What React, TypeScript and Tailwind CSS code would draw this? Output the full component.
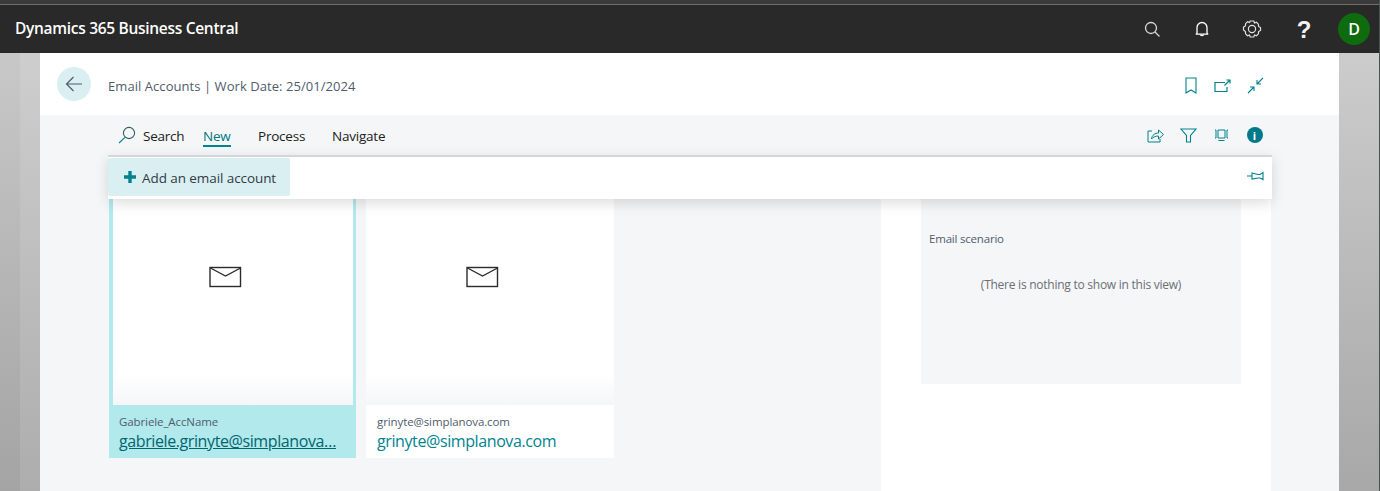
const teal = '#00838f'

function HeaderIcons() {
  return (
    <div className="flex items-center">
      <div className="w-[50px] flex justify-center">
        <svg width="18" height="18" viewBox="0 0 18 18" fill="none" stroke="#d8d8d8" strokeWidth="1.3">
          <circle cx="8" cy="8" r="5.5" />
          <path d="M12 12l4.5 4.5" />
        </svg>
      </div>
      <div className="w-[50px] flex justify-center">
        <svg width="18" height="18" viewBox="0 0 18 18" fill="none" stroke="#ffffff" strokeWidth="1.3">
          <path d="M4 13V7.5a5 5 0 0 1 10 0V13c0 .7.5 1 1.2 1.2H2.8C3.5 14 4 13.7 4 13z" />
          <path d="M7.3 14.500c.2 1.600 3.200 1.600 3.400 0" />
        </svg>
      </div>
      <div className="w-[50px] mr-0.5 flex justify-center">
        <svg width="20" height="20" viewBox="0 0 20 20" fill="none" stroke="#e2e2e2" strokeWidth="1.2">
          <path d="M8.2 2h3.6l.7 2 2-.7 1.900 1.900.2 2.200 1.900 1.100v3l-1.900 1.100-.2 2.200-1.900 1.900-2-.7-.7 2H8.200l-.7-2-2 .7-1.900-1.900-.2-2.200L1.500 11V8l1.900-1.100.2-2.200 1.900-1.900 2 .7z" />
          <circle cx="10" cy="10" r="3.6" />
        </svg>
      </div>
      <div className="w-[50px] flex justify-center pt-0.5 text-[#f2f2f2] text-[24px] leading-none font-bold font-['Liberation_Sans',sans-serif]">?</div>
      <div className="w-[50px] flex justify-center">
        <div className="w-8 h-8 rounded-full bg-[#0e6b0e] text-white flex items-center justify-center text-[16px] font-semibold">D</div>
      </div>
    </div>
  )
}

function Envelope() {
  return (
    <svg width="33" height="22" viewBox="0 0 33 22" fill="none" stroke="#2b2b2b" strokeWidth="1.4">
      <rect x="1" y="1.5" width="30.5" height="19" />
      <path d="M1.500 2l15 8 15-8" />
    </svg>
  )
}

function AccountCard({ name, email, selected }: { name: string; email: string; selected?: boolean }) {
  return (
    <div className={selected ? 'w-[247px] flex flex-col bg-[#b2e9ec]' : 'w-[248px] flex flex-col bg-white'}>
      <div className={selected ? 'h-[206px] ml-1 mr-[3px] pr-[16px] bg-gradient-to-b from-white from-[85%] to-[#f5f6f8] flex justify-center pt-[67px]' : 'h-[206px] pr-4 bg-gradient-to-b from-white from-[85%] to-[#f5f6f8] flex justify-center pt-[67px]'}>
        <div className="h-[22px]">
          <Envelope />
        </div>
      </div>
      <div className={selected ? 'h-[53px] px-2.5 pt-[9px]' : 'h-[53px] pl-[11px] pr-2.5 pt-[9px]'}>
        <div className="text-[11.5px] leading-4 text-[#505c6d] tracking-[-0.1px] whitespace-nowrap">{name}</div>
        <div className={selected ? 'text-[16px] leading-[22px] text-[#00666e] underline tracking-[-0.4px] whitespace-nowrap' : 'text-[16px] leading-[22px] text-[#00838f] tracking-[-0.4px] whitespace-nowrap'}>{email}</div>
      </div>
    </div>
  )
}

export default function App() {
  return (
    <div className="w-[1380px] h-[491px] overflow-hidden flex flex-col bg-[#b5b5b5] border-r border-[#4a5552] font-['Open_Sans','Noto_Sans',sans-serif]">
      <div className="h-[4px] bg-[#3a3a3a]" />
      <div className="h-px bg-[#6e6e6e]" />
      <div className="h-12 bg-[#292929] flex items-center justify-between pl-[15px]">
        <div className="text-white text-[15.5px] font-semibold tracking-[-0.3px]">Dynamics 365 Business Central</div>
        <HeaderIcons />
      </div>

      <div className="flex-1 flex min-h-0">
        <div className="w-10 flex">
          <div className="w-5 bg-gradient-to-b from-[#c8c8c8] to-[#a4a4a4]" />
          <div className="w-5 bg-gradient-to-b from-[#cecece] to-[#adadad]" />
        </div>

        <div className="w-[1299px] flex flex-col">
          <div className="h-[62px] bg-white flex items-center justify-between pl-[17px] pr-[67px]">
            <div className="flex items-center gap-[17px]">
              <div className="w-[34px] h-[34px] rounded-full bg-[#d9eff2] flex items-center justify-center">
                <svg width="18" height="16" viewBox="0 0 18 16" fill="none" stroke="#505c6d" strokeWidth="1.2">
                  <path d="M17 8H1.500M8.500 1L1.500 8l7 7" />
                </svg>
              </div>
              <div className="text-[13px] text-[#505c6d] tracking-[0.06px] pt-[6px]">Email Accounts | Work Date: 25/01/2024</div>
            </div>
            <div className="flex items-center pt-[3px]">
              <div className="w-[33px] pl-0.5 flex justify-center">
                <svg width="12" height="17" viewBox="0 0 12 17" fill="none" stroke={teal} strokeWidth="1.1">
                  <path d="M1 1h10v15l-5-3-5 3z" />
                </svg>
              </div>
              <div className="w-[33px] flex justify-center">
                <svg width="17" height="14" viewBox="0 0 17 14" fill="none" stroke={teal} strokeWidth="1.2">
                  <path d="M11 3.500H1v9h12V8" />
                  <path d="M10.500 6.500L16 1M12.500 1H16v3.500" />
                </svg>
              </div>
              <div className="w-[33px] flex justify-center">
                <svg width="17" height="17" viewBox="0 0 17 17" fill="none" stroke={teal} strokeWidth="1.1">
                  <path d="M16 1l-6 6M10 3v4h4M1 16l6-6M3 10h4v4" />
                </svg>
              </div>
            </div>
          </div>

          <div className="flex-1 bg-[#f5f6f8] flex flex-col min-h-0">
            <div className="h-10 ml-[68px] mr-[68px] flex items-center justify-between">
              <div className="flex items-center text-[13.5px] text-[#212121] tracking-[-0.22px]">
                <div className="flex items-center w-[95px] pl-[10px] gap-[7px]">
                  <svg width="18" height="18" viewBox="0 0 18 18" fill="none" strokeWidth="1.1">
                    <circle cx="11" cy="7" r="5.600" stroke="#2f5f66" />
                    <path d="M7 11.300L1 17" stroke={teal} />
                  </svg>
                  <span className="pt-[2px]">Search</span>
                </div>
                <div className="w-[55px] pt-[2px]">
                  <span className="text-[#00767f] inline-block border-b-2 border-[#00838f] leading-[18px]">New</span>
                </div>
                <div className="w-[74px] pt-[2px]">Process</div>
                <div className="pt-[2px]">Navigate</div>
              </div>
              <div className="flex items-center">
                <div className="w-[33px] flex justify-center">
                  <svg width="17" height="15" viewBox="0 0 17 15" fill="none" stroke={teal} strokeWidth="1">
                    <path d="M5 3H1v11h12v-3" />
                    <path d="M4.500 11c.5-4 3.500-6 7-6V2l5 4.500L11.500 11V8C8.500 8 6 9 4.500 11z" />
                  </svg>
                </div>
                <div className="w-[33px] flex justify-center">
                  <svg width="17" height="15" viewBox="0 0 17 15" fill="none" stroke={teal} strokeWidth="1.1">
                    <path d="M1 1h15l-5.500 6.500V14h-4V7.500z" />
                  </svg>
                </div>
                <div className="w-[33px] flex justify-center">
                  <svg width="15" height="14" viewBox="0 0 15 14" fill="none" stroke={teal} strokeWidth="1">
                    <path d="M4 2h7v8H4zM1 2h1v8H1M14 2h-1v8h1M4.500 12.500h6" />
                  </svg>
                </div>
                <div className="w-[33px] flex justify-center">
                  <div className="w-4 h-4 rounded-full bg-[#007a8a] text-white flex items-center justify-center text-[11px] leading-none font-bold">i</div>
                </div>
              </div>
            </div>

            <div className="relative z-10 h-11 ml-[68px] mr-[67px] pb-0.5 bg-white border-t-2 border-[#d4d6d9] shadow-[0_4px_14px_rgba(0,0,0,0.14)] flex items-center justify-between pr-2">
              <div className="w-[182px] h-[38px] rounded-[2px] bg-[#d9eff2] flex items-center pl-[16px] gap-[6px] text-[13.5px] text-[#333b46] tracking-[-0.08px]">
                <svg width="12" height="12" viewBox="0 0 12 12" fill={teal}>
                  <path d="M4.300 0h3.400v4.300H12v3.400H7.700V12H4.300V7.700H0V4.300h4.300z" />
                </svg>
                <span className="pt-[2px]">Add an email account</span>
              </div>
              <svg className="-translate-y-px" width="17" height="10" viewBox="0 0 17 10" fill="none" stroke={teal} strokeWidth="1.1">
                <path d="M0 5h5M5 2l6 1.500h2L16 1.500v7l-3-1.500h-2L5 8z" />
              </svg>
            </div>

            <div className="flex-1 flex justify-between ml-[69px] mr-[68px] min-h-0">
              <div className="flex gap-[10px] items-start">
                <AccountCard name="Gabriele_AccName" email="gabriele.grinyte@simplanova…" selected />
                <AccountCard name="grinyte@simplanova.com" email="grinyte@simplanova.com" />
              </div>
              <div className="w-[390px] bg-white pl-10 pr-[30px]">
                <div className="h-[185px] bg-[#f5f6f8] px-2 pt-[32px]">
                  <div className="text-[11.5px] leading-4 text-[#505c6d] tracking-[-0.2px]">Email scenario</div>
                  <div className="mt-[30px] text-center text-[12px] leading-4 text-[#6b6f75] tracking-[-0.25px]">(There is nothing to show in this view)</div>
                </div>
              </div>
            </div>
          </div>
        </div>

        <div className="flex-1 bg-gradient-to-b from-[#cccccc] to-[#a8a8a8]" />
      </div>
    </div>
  )
}
